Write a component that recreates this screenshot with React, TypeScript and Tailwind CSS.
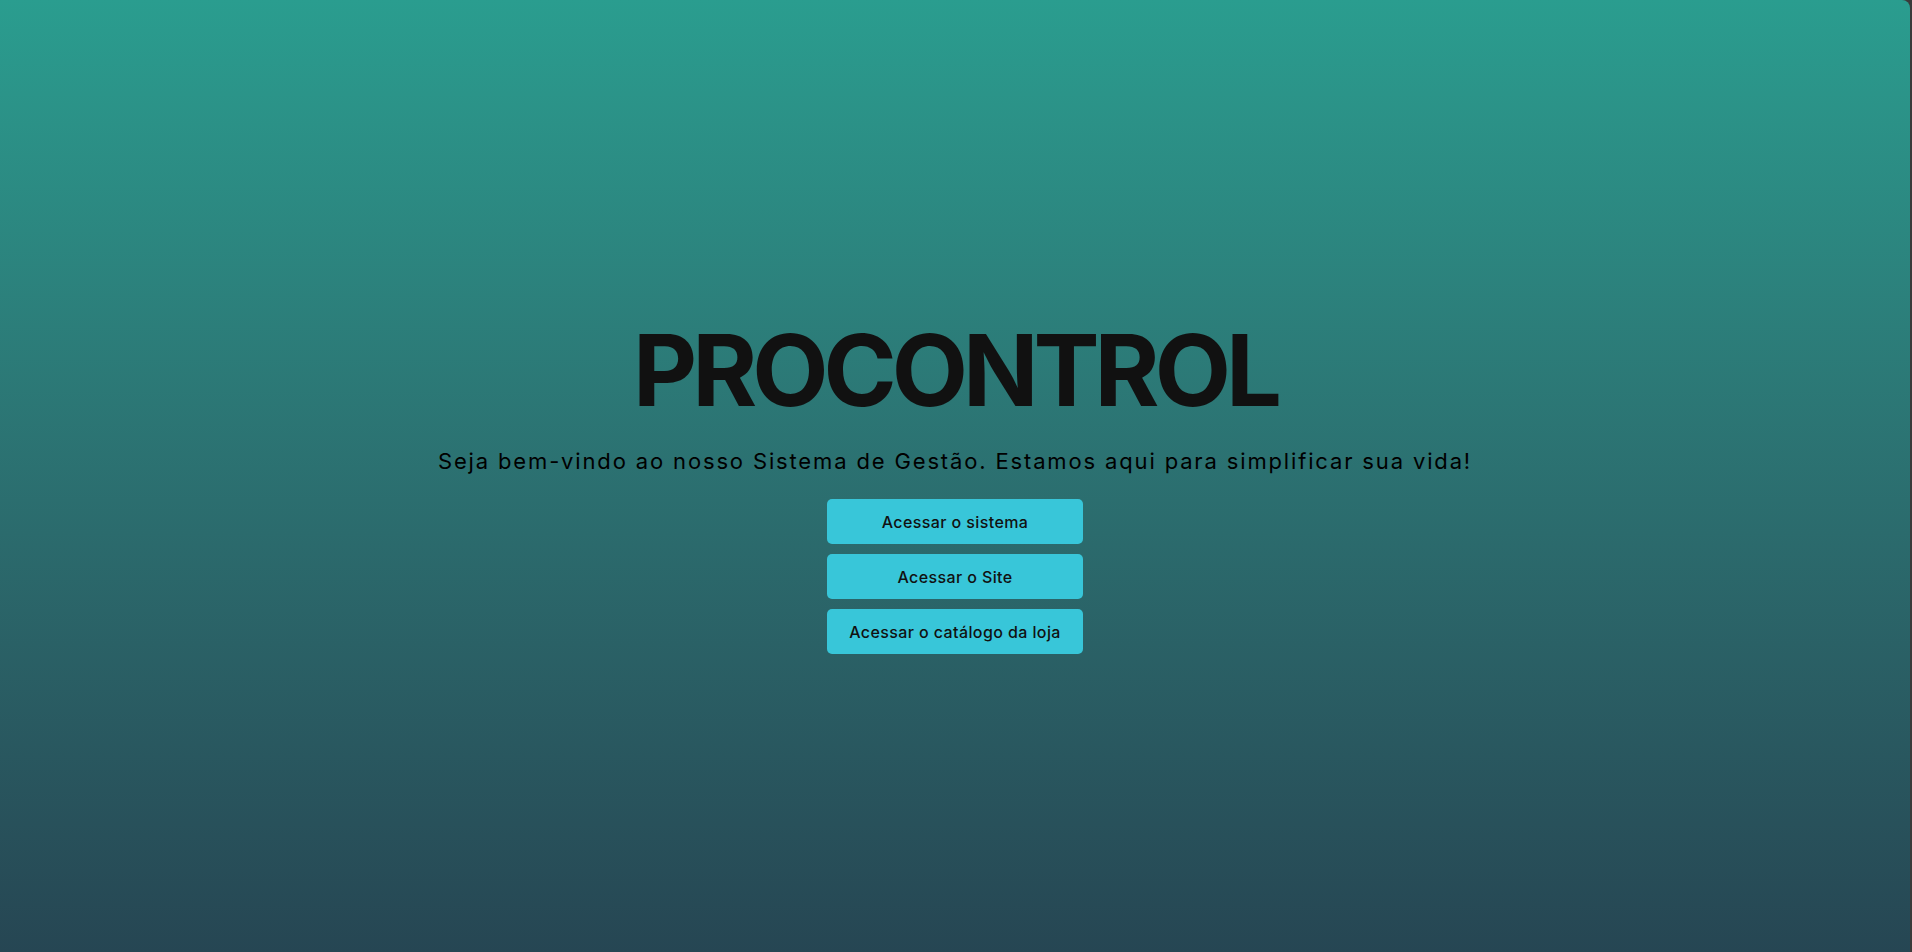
import React from "react";

export default function App() {
  const buttons = ["Acessar o sistema", "Acessar o Site", "Acessar o catálogo da loja"];
  return (
    <div className="w-full h-[952px] bg-[#3a3a3a] flex">
      <div
        className="flex-1 mr-[2px] rounded-tr-[8px] bg-gradient-to-b from-[#2a9d8f] to-[#264653] flex flex-col items-center justify-center pt-[23px]"
        style={{ fontFamily: "Inter, 'Noto Sans', sans-serif" }}
      >
        <h1 className="text-[99px] leading-none font-bold text-[#111111] tracking-[-5px]">PROCONTROL</h1>
        <p className="mt-[27px] text-[22px] leading-[28px] text-black tracking-[1.85px]">
          Seja bem-vindo ao nosso Sistema de Gestão. Estamos aqui para simplificar sua vida!
        </p>
        <div className="mt-[24px] flex flex-col gap-[10px]">
          {buttons.map((b) => (
            <button
              key={b}
              className="w-[256px] h-[45px] rounded-[5px] bg-[#38c6d9] text-[16px] font-medium tracking-[0.4px] text-[#111]"
            >
              {b}
            </button>
          ))}
        </div>
      </div>
    </div>
  );
}
